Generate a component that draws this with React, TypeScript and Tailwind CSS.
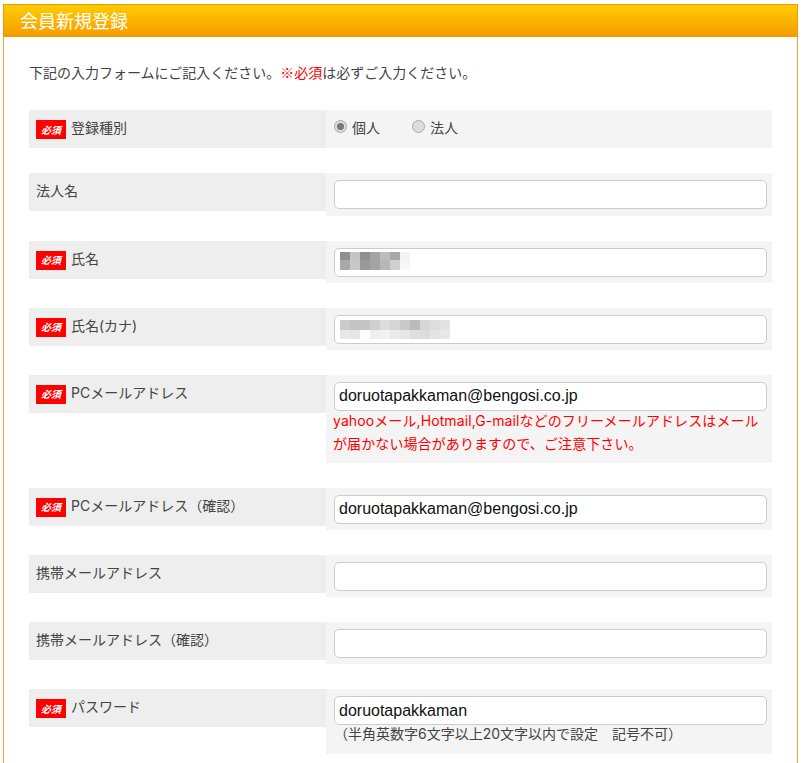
import type { ReactNode } from 'react';

const sans = 'font-["Inter","Noto_Sans_CJK_JP",sans-serif]';

function Badge() {
  return (
    <span className="flex h-[19px] w-[30px] shrink-0 items-center justify-center bg-[#ff0000] text-[10px] font-bold italic leading-none text-white">
      必須
    </span>
  );
}

function Row({ label, required, children }: { label: string; required?: boolean; children: ReactNode }) {
  return (
    <div className="mb-[25px] flex items-start">
      <div className="flex h-[38px] w-[297px] shrink-0 items-start gap-[5px] bg-[#eeeeee] pl-[7px] pt-[10px]">
        {required && <Badge />}
        <span className="-mt-[2px] text-[14px] leading-[20px] text-[#444444]">{label}</span>
      </div>
      <div className="w-[446px] bg-[#f4f4f4] pb-[6.15px] pl-[8px] pr-[5px] pt-[7px]">{children}</div>
    </div>
  );
}

function TextBox({ value = '' }: { value?: string }) {
  return (
    <input
      readOnly
      value={value}
      className='block h-[29px] w-full rounded-[5px] border border-[#cccccc] bg-white px-[4px] font-["Liberation_Sans",sans-serif] text-[16px] text-[#111111] outline-none'
    />
  );
}

function Radio({ label, checked }: { label: string; checked?: boolean }) {
  return (
    <label className="flex items-center gap-[5px]">
      <span className="-mt-[3px] flex h-[13px] w-[13px] items-center justify-center rounded-full border border-[#aaaaaa] bg-[#dddddd]">
        {checked && <span className="h-[7px] w-[7px] rounded-full bg-[#777777]" />}
      </span>
      <span className="text-[14px] leading-[20px] text-[#444444]">{label}</span>
    </label>
  );
}

// モザイク部分
const nameTop = ['#8f8f8f', '#c4c4c4', '#8f8f8f', '#a3a3a3', '#bcbcbc', '#a8a8a8', '#f3f3f3'];
const nameBottom = ['#a9a9a9', '#c8c8c8', '#999999', '#a3a3a3', '#b8b8b8', '#d0d0d0', '#f7f7f7'];
const kanaTop = ['#cccccc', '#c4c4c4', '#c4c4c4', '#d0d0d0', '#dcdcdc', '#d6d6d6', '#c9c9c9', '#bbbbbb', '#d6d6d6', '#dddddd', '#e2e2e2'];
const kanaBottom = ['#e8e8e8', '#e6e6e6', '#fdfdfd', '#efefef', '#f2f2f2', '#eaeaea', '#e6e6e6', '#dfdfdf', '#dcdcdc', '#e4e4e4', '#e8e8e8'];

function Mosaic({ top, bottom, split, height }: { top: string[]; bottom: string[]; split: number; height: number }) {
  return (
    <svg width={top.length * 10} height={height} shapeRendering="crispEdges">
      {top.map((c, i) => <rect key={i} x={i * 10} y={0} width={10} height={split} fill={c} />)}
      {bottom.map((c, i) => <rect key={i} x={i * 10} y={split} width={10} height={height - split} fill={c} />)}
    </svg>
  );
}

export default function App() {
  return (
    <div className={`h-[763px] overflow-hidden bg-white pl-[3px] pt-[4px] ${sans}`}>
      <div className="h-[900px] w-[795px] border-x border-[#e9a83f]">
        <h1 className="-mx-[1px] flex h-[33px] items-center border-x border-t border-[#f09a00] bg-gradient-to-b from-[#ffcc00] to-[#f59b00] pl-[16px] text-[18px] font-normal text-white">
          会員新規登録
        </h1>
        <div className="pl-[25px] pt-[25px]">
          <p className="mb-[28.45px] h-[20px] text-[14px] leading-[20px] text-[#444444]">
            下記の入力フォームにご記入ください。<span className='font-["Noto_Sans_CJK_JP",sans-serif] text-[#ff0000]'>※必須</span>は必ずご入力ください。
          </p>

          <Row label="登録種別" required>
            <div className="-mt-[3px] mb-[0.85px] flex h-[27px] items-center gap-[32px]">
              <Radio label="個人" checked />
              <Radio label="法人" />
            </div>
          </Row>
          <Row label="法人名">
            <TextBox />
          </Row>
          <Row label="氏名" required>
            <div className="relative">
              <TextBox />
              <div className="absolute left-[6px] top-[4px]">
                <Mosaic top={nameTop} bottom={nameBottom} split={8} height={18} />
              </div>
            </div>
          </Row>
          <Row label="氏名(カナ)" required>
            <div className="relative">
              <TextBox />
              <div className="absolute left-[6px] top-[5px]">
                <Mosaic top={kanaTop} bottom={kanaBottom} split={10} height={19} />
              </div>
            </div>
          </Row>
          <Row label="PCメールアドレス" required>
            <TextBox value="doruotapakkaman@bengosi.co.jp" />
            <p className="-ml-[1px] -mt-[1.5px] pb-[1.35px] text-[14px] leading-[23px] tracking-[0.1px] text-[#ff0000]">
              yahooメール,Hotmail,G-mailなどのフリーメールアドレスはメールが届かない場合がありますので、ご注意下さい。
            </p>
          </Row>
          <Row label="PCメールアドレス（確認）" required>
            <TextBox value="doruotapakkaman@bengosi.co.jp" />
          </Row>
          <Row label="携帯メールアドレス">
            <TextBox />
          </Row>
          <Row label="携帯メールアドレス（確認）">
            <TextBox />
          </Row>
          <Row label="パスワード" required>
            <TextBox value="doruotapakkaman" />
            <p className="-mt-[3px] pb-[3px] text-[14px] leading-[23px] text-[#444444]">
              （半角英数字6文字以上20文字以内で設定　記号不可）
            </p>
          </Row>
        </div>
      </div>
    </div>
  );
}
